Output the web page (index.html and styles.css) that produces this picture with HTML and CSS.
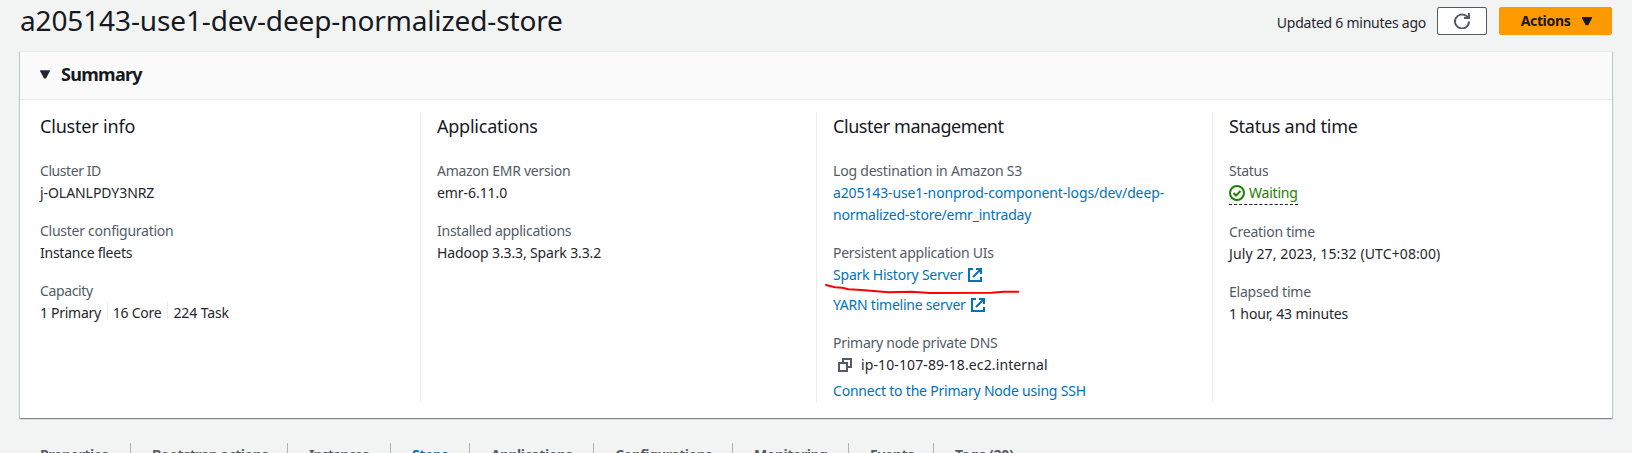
FILE: index.html
```html
<!DOCTYPE html>
<html lang="en">
<head>
<meta charset="utf-8">
<title>EMR cluster</title>
<link rel="stylesheet" href="styles.css">
</head>
<body>
<main class="page">
  <header class="top">
    <h1 class="title">a205143-use1-dev-deep-normalized-store</h1>
    <div class="top-actions">
      <span class="updated ls-25">Updated 6 minutes ago</span>
      <button class="btn btn-icon" aria-label="Refresh">
        <svg width="16" height="16" viewBox="0 0 16 16" fill="none" stroke="currentColor" stroke-width="2"><path d="M15 8.500A7 7 0 1 1 12.500 3.100L14.500 5M15 0v5H10"/></svg>
      </button>
      <button class="btn btn-primary"><span class="ls-34">Actions</span>
        <svg width="10" height="9" viewBox="0 0 10 9"><path d="M0 0h10v1L6.300 8.300H3.700L0 1z" fill="currentColor"/></svg>
      </button>
    </div>
  </header>

  <section class="card">
    <div class="card-head">
      <svg width="10" height="9" viewBox="0 0 10 9"><path d="M.2.200h9.600v1L6 8.600H4L.2 1.200z" fill="currentColor"/></svg>
      <h2 class="card-title">Summary</h2>
    </div>
    <div class="columns">
      <div class="column">
        <h3 class="col-title ls-18">Cluster info</h3>
        <div class="field"><div class="label ls-44">Cluster ID</div><div class="ls-6">j-OLANLPDY3NRZ</div></div>
        <div class="field"><div class="label ls-26">Cluster configuration</div><div class="ls-25">Instance fleets</div></div>
        <div class="field"><div class="label ls-36">Capacity</div>
          <div class="capacity"><span class="ls-28">1 Primary</span><span class="ls-25">16 Core</span><span class="ls-13">224 Task</span></div>
        </div>
      </div>
      <div class="column">
        <h3 class="col-title ls-23">Applications</h3>
        <div class="field"><div class="label ls-28">Amazon EMR version</div><div class="ls-6">emr-6.11.0</div></div>
        <div class="field"><div class="label ls-25">Installed applications</div><div class="ls-14">Hadoop 3.3.3, Spark 3.3.2</div></div>
      </div>
      <div class="column">
        <h3 class="col-title ls-44">Cluster management</h3>
        <div class="field"><div class="label ls-20">Log destination in Amazon S3</div>
          <a class="link"><span class="ls-12">a205143-use1-nonprod-component-logs/dev/deep-</span><br><span class="ls-23">normalized-store/emr_intraday</span></a>
        </div>
        <div class="field"><div class="label ls-26">Persistent application UIs</div>
          <div class="link-list">
            <a class="link ext"><span class="ls-21">Spark History Server</span>
              <svg width="14" height="14" viewBox="0 0 14 14" fill="none" stroke="currentColor" stroke-width="2"><path d="M5 1H1v12h12V9M8 1h5v5M13 1 5 9"/></svg></a>
            <a class="link ext"><span class="ls-23">YARN timeline server</span>
              <svg width="14" height="14" viewBox="0 0 14 14" fill="none" stroke="currentColor" stroke-width="2"><path d="M5 1H1v12h12V9M8 1h5v5M13 1 5 9"/></svg></a>
            <svg class="underline" width="196" height="12" viewBox="0 0 196 12" fill="none" stroke="#fe0000" stroke-width="2" stroke-linecap="round" stroke-linejoin="round"><path d="M2 2l9 2.300 7.300.4 6 1.600 13.400.7L64.300 9.300l23.400-.6L106 10l61.700-.3 11.600-1h15"/></svg>
          </div>
        </div>
        <div class="field"><div class="label ls-26">Primary node private DNS</div>
          <div class="copy"><svg width="14" height="14" viewBox="0 0 14 14" fill="none" stroke="currentColor" stroke-width="2"><path d="M1 5h8v8H1zM5 5V1h8v8H9"/></svg><span class="ls-p11">ip-10-107-89-18.ec2.internal</span></div>
          <a class="link ssh ls-21">Connect to the Primary Node using SSH</a>
        </div>
      </div>
      <div class="column">
        <h3 class="col-title ls-26">Status and time</h3>
        <div class="field"><div class="label ls-26">Status</div>
          <div class="status"><svg width="16" height="16" viewBox="0 0 16 16" fill="none" stroke="currentColor" stroke-width="2"><circle cx="8" cy="8" r="7"/><path d="M4.500 8l2.500 2.500 4.500-4.500"/></svg><span class="ls-20">Waiting</span></div>
        </div>
        <div class="field"><div class="label ls-26">Creation time</div><div class="ls-p11">July 27, 2023, 15:32 (UTC+08:00)</div></div>
        <div class="field"><div class="label ls-21">Elapsed time</div><div class="ls-14">1 hour, 43 minutes</div></div>
      </div>
    </div>
  </section>

  <nav class="tabs">
    <a class="tab w-1 ls-44">Properties</a>
    <a class="tab w-2 ls-44">Bootstrap actions</a>
    <a class="tab w-3 ls-94">Instances</a>
    <a class="tab w-4 ls-44 active">Steps</a>
    <a class="tab w-5 ls-44">Applications</a>
    <a class="tab w-6 ls-51">Configurations</a>
    <a class="tab w-7 ls-51">Monitoring</a>
    <a class="tab w-8 ls-44">Events</a>
    <a class="tab ls-18">Tags (20)</a>
  </nav>
</main>
</body>
</html>
```
FILE: styles.css
```css
* { box-sizing: border-box; }
body {
  margin: 0;
  height: 453px;
  overflow: hidden;
  background: #f2f3f3;
  color: #24272d;
  font: 14px/22px "Noto Sans", "Open Sans", sans-serif;
}
h1, h2, h3 { margin: 0; font-weight: 400; color: #16191f; }
svg { display: block; flex: none; }
.page { padding: 0 20px; }

.top { height: 51px; display: flex; justify-content: space-between; }
.title { font-size: 28px; line-height: 40px; letter-spacing: -.13px; }
.top-actions { display: flex; align-items: flex-start; padding-top: 7px; }
.updated { margin: 5px 11px 0 0; }
.btn {
  height: 28px;
  padding: 0;
  display: flex;
  align-items: center;
  justify-content: center;
  border: 1px solid #545b64;
  border-radius: 2px;
  background: #fff;
  color: #545b64;
  font: 700 14px/22px "Noto Sans", sans-serif;
}
.btn-icon { width: 50px; }
.btn-primary {
  width: 113px;
  margin-left: 12px;
  gap: 12px;
  padding-left: 2px;
  border-color: #f90;
  background: #f90;
  color: #16191f;
}

.card {
  height: 367px;
  background: #fff;
  border-top: 1px solid #eaeded;
  box-shadow: 0 1px 1px 0 rgba(0, 28, 36, .3), 1px 1px 1px 0 rgba(0, 28, 36, .15), -1px 1px 1px 0 rgba(0, 28, 36, .15);
}
.card-head {
  height: 48px;
  padding: 0 20px 2px;
  display: flex;
  align-items: center;
  gap: 11px;
  background: #fafafa;
  border-bottom: 1px solid #eaeded;
}
.card-title { font-size: 18px; font-weight: 700; line-height: 22px; letter-spacing: -.7px; padding-bottom: 2px; }
.columns { display: grid; grid-template-columns: 400px 396px 396px 1fr; height: 302px; padding-top: 12px; }
.column { padding: 0 20px 0 16px; border-left: 1px solid #eaeded; display: flex; flex-direction: column; gap: 16px; }
.column:first-child { padding-left: 20px; border-left: 0; }
.col-title { font-size: 18px; line-height: 22px; padding: 3px 0 7px; }
.label { color: #545b64; }
.link { color: #0073bb; }
.link-list { position: relative; display: flex; flex-direction: column; gap: 8px; }
.ext { display: flex; align-items: center; gap: 5px; }
.underline { position: absolute; left: -9px; top: 19px; }
.copy { display: flex; align-items: center; gap: 9px; padding-left: 5px; }
.copy svg { color: #545b64; }
.ssh { display: block; margin-top: 4px; }
.capacity { display: flex; }
.capacity span + span { margin-left: 6px; padding-left: 6px; box-shadow: inset 1px 0 #eaeded; height: 17px; line-height: 22px; }
.status { width: 69px; height: 23px; display: flex; align-items: flex-start; gap: 4px; color: #1d8102; border-bottom: 1px dashed #16191f; }
.status svg { margin-top: 3px; }

.tabs { display: flex; margin-top: 25px; height: 28px; }
.tab { padding: 0 20px; font-weight: 700; color: #545b64; line-height: 23px; white-space: nowrap; }
.tab + .tab { border-left: 1px solid #aab7b8; padding-left: 21px; }
.tab.active { color: #0073bb; }
.w-1 { width: 110px; }
.w-2 { width: 157px; }
.w-3 { width: 103px; }
.w-4 { width: 79px; }
.w-5 { width: 124px; }
.w-6 { width: 139px; }
.w-7 { width: 116px; }
.w-8 { width: 85px; }

/* Tracking steps, in hundredths of a pixel */
.ls-6 { letter-spacing: -.06px; }
.ls-12 { letter-spacing: -.12px; }
.ls-13 { letter-spacing: -.13px; }
.ls-14 { letter-spacing: -.14px; }
.ls-18 { letter-spacing: -.18px; }
.ls-20 { letter-spacing: -.2px; }
.ls-21 { letter-spacing: -.21px; }
.ls-23 { letter-spacing: -.23px; }
.ls-25 { letter-spacing: -.25px; }
.ls-26 { letter-spacing: -.26px; }
.ls-28 { letter-spacing: -.28px; }
.ls-34 { letter-spacing: -.34px; }
.ls-36 { letter-spacing: -.36px; }
.ls-44 { letter-spacing: -.44px; }
.ls-51 { letter-spacing: -.51px; }
.ls-94 { letter-spacing: -.94px; }
.ls-p11 { letter-spacing: .11px; }
```
